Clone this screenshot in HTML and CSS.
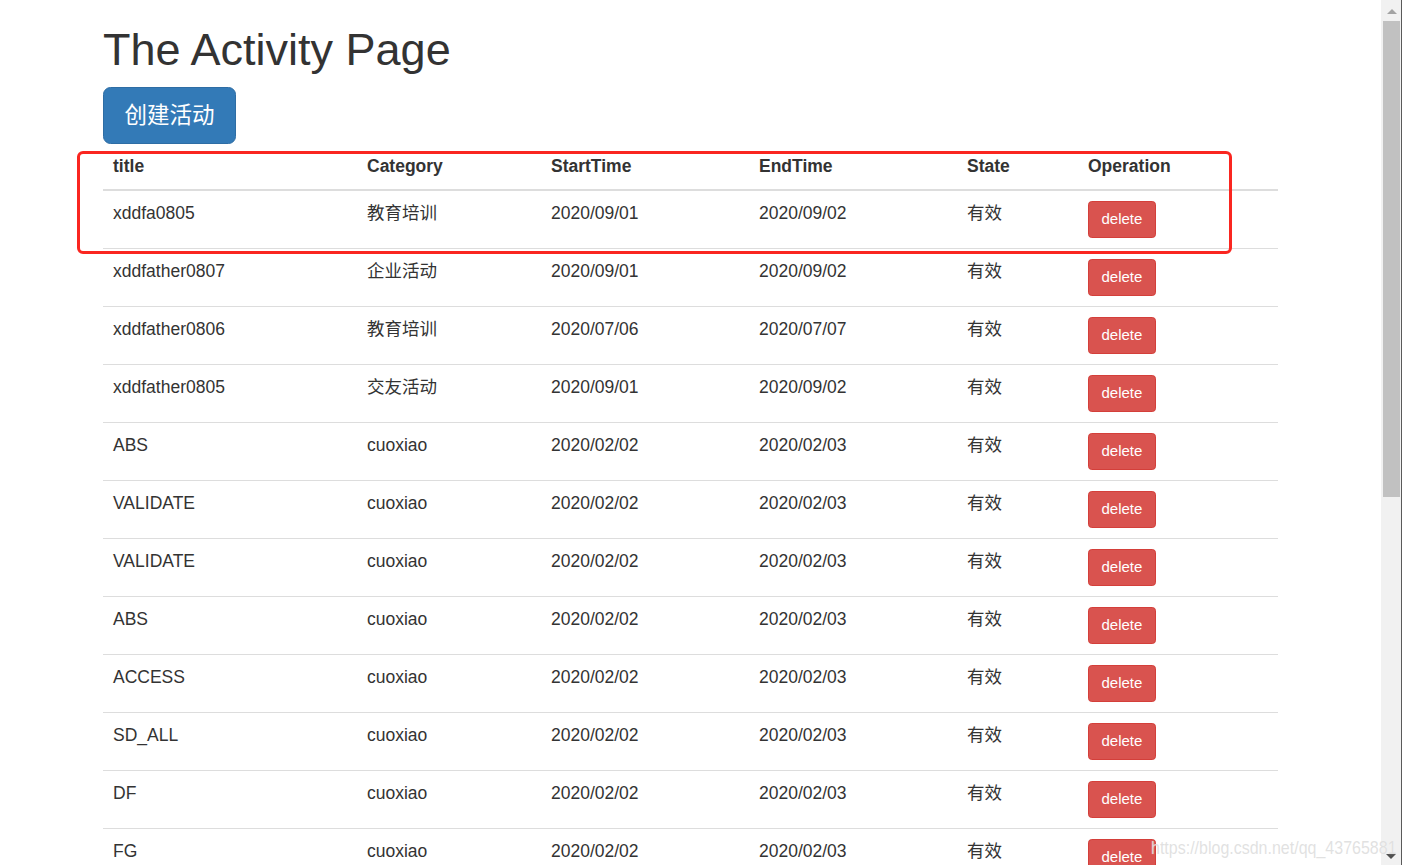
FILE: index.html
```html
<!DOCTYPE html>
<html lang="zh-CN">
<head>
<meta charset="utf-8">
<title>The Activity Page</title>
<link rel="stylesheet" href="styles.css">
</head>
<body>
<div class="page">
  <main class="viewport">
    <div class="container">
      <h1 class="page-title">The Activity Page</h1>
      <button class="btn btn-primary btn-lg" type="button">创建活动</button>
      <table class="table">
        <thead>
          <tr>
            <th class="c-title">title</th>
            <th class="c-cat">Category</th>
            <th class="c-start">StartTime</th>
            <th class="c-end">EndTime</th>
            <th class="c-state">State</th>
            <th class="c-op">Operation</th>
          </tr>
        </thead>
        <tbody>
          <tr><td>xddfa0805</td><td>教育培训</td><td>2020/09/01</td><td>2020/09/02</td><td>有效</td><td><button class="btn btn-danger btn-sm" type="button">delete</button></td></tr>
          <tr><td>xddfather0807</td><td>企业活动</td><td>2020/09/01</td><td>2020/09/02</td><td>有效</td><td><button class="btn btn-danger btn-sm" type="button">delete</button></td></tr>
          <tr><td>xddfather0806</td><td>教育培训</td><td>2020/07/06</td><td>2020/07/07</td><td>有效</td><td><button class="btn btn-danger btn-sm" type="button">delete</button></td></tr>
          <tr><td>xddfather0805</td><td>交友活动</td><td>2020/09/01</td><td>2020/09/02</td><td>有效</td><td><button class="btn btn-danger btn-sm" type="button">delete</button></td></tr>
          <tr><td>ABS</td><td>cuoxiao</td><td>2020/02/02</td><td>2020/02/03</td><td>有效</td><td><button class="btn btn-danger btn-sm" type="button">delete</button></td></tr>
          <tr><td>VALIDATE</td><td>cuoxiao</td><td>2020/02/02</td><td>2020/02/03</td><td>有效</td><td><button class="btn btn-danger btn-sm" type="button">delete</button></td></tr>
          <tr><td>VALIDATE</td><td>cuoxiao</td><td>2020/02/02</td><td>2020/02/03</td><td>有效</td><td><button class="btn btn-danger btn-sm" type="button">delete</button></td></tr>
          <tr><td>ABS</td><td>cuoxiao</td><td>2020/02/02</td><td>2020/02/03</td><td>有效</td><td><button class="btn btn-danger btn-sm" type="button">delete</button></td></tr>
          <tr><td>ACCESS</td><td>cuoxiao</td><td>2020/02/02</td><td>2020/02/03</td><td>有效</td><td><button class="btn btn-danger btn-sm" type="button">delete</button></td></tr>
          <tr><td>SD_ALL</td><td>cuoxiao</td><td>2020/02/02</td><td>2020/02/03</td><td>有效</td><td><button class="btn btn-danger btn-sm" type="button">delete</button></td></tr>
          <tr><td>DF</td><td>cuoxiao</td><td>2020/02/02</td><td>2020/02/03</td><td>有效</td><td><button class="btn btn-danger btn-sm" type="button">delete</button></td></tr>
          <tr><td>FG</td><td>cuoxiao</td><td>2020/02/02</td><td>2020/02/03</td><td>有效</td><td><button class="btn btn-danger btn-sm" type="button">delete</button></td></tr>
        </tbody>
      </table>
    </div>
    <div class="highlight-box"></div>
  </main>
  <div class="scrollbar">
    <div class="sb-arrow"><span class="tri-up"></span></div>
    <div class="sb-thumb"></div>
    <div class="sb-fill"></div>
    <div class="sb-arrow"><span class="tri-down"></span></div>
  </div>
  <div class="watermark">https://blog.csdn.net/qq_43765881</div>
</div>
</body>
</html>
```

FILE: styles.css
```css
* {
  box-sizing: border-box;
}

html, body {
  margin: 0;
  padding: 0;
  height: 865px;
  overflow: hidden;
  background: #fff;
}

body {
  font-family: "Liberation Sans", "Noto Sans CJK SC", sans-serif;
  font-size: 17.5px;
  line-height: 25px;
  color: #333;
}

.page {
  display: flex;
  height: 865px;
  position: relative;
}

.viewport {
  flex: 1 1 auto;
  height: 865px;
  overflow: hidden;
  position: relative;
}

.container {
  width: 1212.5px;
  margin: 0 auto;
  padding: 0 18.75px;
}

.page-title {
  font-family: "Liberation Sans", "Noto Sans CJK SC", sans-serif;
  font-size: 45px;
  font-weight: 400;
  line-height: 49.5px;
  margin: 25px 0 12.5px;
  color: #333;
}

.btn {
  display: inline-block;
  font-family: "Liberation Sans", "Noto Sans CJK SC", sans-serif;
  font-weight: 400;
  text-align: center;
  white-space: nowrap;
  vertical-align: middle;
  border: 1px solid transparent;
  cursor: pointer;
  color: #fff;
  margin: 0;
}

.btn-primary {
  background-color: #337ab7;
  border-color: #2e6da4;
}

.btn-lg {
  font-size: 22.5px;
  line-height: 30px;
  padding: 12px 20px;
  border-radius: 7.5px;
  height: 57px;
  width: 133px;
}

.btn-danger {
  background-color: #d9534f;
  border-color: #d43f3a;
}

.btn-sm {
  font-size: 15px;
  line-height: 22.5px;
  padding: 6.25px 12.5px;
  border-radius: 3.75px;
  vertical-align: baseline;
}

.table {
  width: 100%;
  border-collapse: collapse;
  border-spacing: 0;
  margin-top: 0;
  margin-bottom: 25px;
}

.table th,
.table td {
  padding: 10px;
  text-align: left;
  line-height: 25px;
}

.table th {
  font-weight: 700;
  vertical-align: bottom;
  border-bottom: 2px solid #ddd;
}

.table td {
  vertical-align: top;
  border-top: 1px solid #ddd;
}

.c-title { width: 254px; }
.c-cat { width: 184px; }
.c-start { width: 208px; }
.c-end { width: 208px; }
.c-state { width: 121px; }
.c-op { width: 200px; }

.highlight-box {
  position: absolute;
  left: 77px;
  top: 151px;
  width: 1155px;
  height: 103px;
  border: 3px solid #fa2620;
  border-radius: 6px;
  pointer-events: none;
}

.scrollbar {
  flex: 0 0 21px;
  height: 865px;
  background: #f1f1f1;
  border-right: 1px solid #5a5a5a;
  display: flex;
  flex-direction: column;
}

.sb-arrow {
  height: 21px;
  display: flex;
  align-items: center;
  justify-content: center;
  flex: 0 0 21px;
}

.tri-up {
  width: 0;
  height: 0;
  border-left: 5px solid transparent;
  border-right: 5px solid transparent;
  border-bottom: 5px solid #a3a3a3;
  margin-left: 1px;
  margin-top: 2px;
}

.tri-down {
  width: 0;
  height: 0;
  border-left: 5px solid transparent;
  border-right: 5px solid transparent;
  border-top: 5px solid #505050;
  margin-top: 4px;
}

.sb-thumb {
  flex: 0 0 476px;
  margin: 0 1px 0 2px;
  background: #c1c1c1;
}

.sb-fill {
  flex: 1 1 auto;
}

.watermark {
  position: absolute;
  left: 1151px;
  top: 837px;
  font-family: "Liberation Sans", sans-serif;
  font-size: 16px;
  line-height: 18px;
  color: rgba(220, 220, 220, 0.85);
  text-shadow: 0 0 1px rgba(255, 255, 255, 0.6);
  transform: scaleY(1.2);
  transform-origin: left top;
  white-space: nowrap;
  pointer-events: none;
}
```
